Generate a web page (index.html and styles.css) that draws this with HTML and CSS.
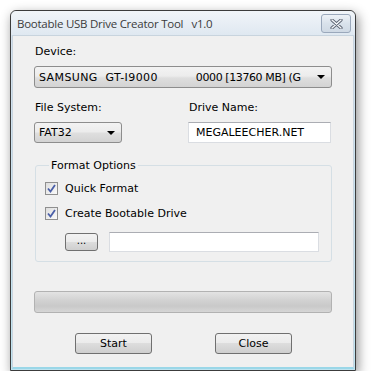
FILE: index.html
```html
<!DOCTYPE html>
<html>
<head>
<meta charset="utf-8">
<link rel="stylesheet" href="styles.css">
</head>
<body>
<div class="window">
  <div class="titlebar">
    <span class="title">Bootable USB Drive Creator Tool&nbsp;&nbsp; v1.0</span>
    <div class="close-btn">
      <svg width="13" height="10" viewBox="0 0 13 10"><path d="M2 1 L11 9 M11 1 L2 9" stroke="#5a6270" stroke-width="3.2" stroke-linecap="round"/><path d="M2 1 L11 9 M11 1 L2 9" stroke="#f4f6f9" stroke-width="1.4" stroke-linecap="round"/></svg>
    </div>
  </div>
  <div class="client">
    <div class="label">Device:</div>
    <div class="combo combo-device"><span class="combo-text"><span class="dev-name">SAMSUNG  GT-I9000</span><span class="dev-info">0000 [13760 MB] (G</span></span><span class="arrow"></span></div>
    <div class="row">
      <div class="col col-fs">
        <div class="label">File System:</div>
        <div class="combo combo-fs"><span class="combo-text">FAT32</span><span class="arrow"></span></div>
      </div>
      <div class="col col-dn">
        <div class="label">Drive Name:</div>
        <div class="textbox textbox-dn">MEGALEECHER.NET</div>
      </div>
    </div>
    <fieldset class="group">
      <legend>Format Options</legend>
      <div class="check-row"><span class="checkbox"><svg width="9" height="9" viewBox="0 0 9 9"><path d="M1 4.5 L3.5 7.5 L8 1" fill="none" stroke="#4a5fa8" stroke-width="1.8"/></svg></span><span>Quick Format</span></div>
      <div class="check-row"><span class="checkbox"><svg width="9" height="9" viewBox="0 0 9 9"><path d="M1 4.5 L3.5 7.5 L8 1" fill="none" stroke="#4a5fa8" stroke-width="1.8"/></svg></span><span>Create Bootable Drive</span></div>
      <div class="browse-row">
        <div class="btn btn-browse">...</div>
        <div class="textbox textbox-path"></div>
      </div>
    </fieldset>
    <div class="progress"></div>
    <div class="buttons">
      <div class="btn btn-main">Start</div>
      <div class="btn btn-main">Close</div>
    </div>
  </div>
</div>
</body>
</html>
```

FILE: styles.css
```css
html, body {
  margin: 0;
  padding: 0;
  background: #ffffff;
}
body {
  padding: 10px 0 0 10px;
  font-family: "DejaVu Sans", Tahoma, sans-serif;
  font-size: 11px;
  color: #000;
}
.window {
  width: 344px;
  height: 359px;
  border: 1px solid #3c3c3c;
  border-radius: 6px 6px 0 0;
  background: linear-gradient(#e6eef6, #d3e1ee 30px, #bfe3ef);
  box-shadow: 2px 4px 12px rgba(0,0,0,0.45);
  display: flex;
  flex-direction: column;
}
.titlebar {
  height: 24px;
  display: flex;
  align-items: center;
  justify-content: space-between;
  padding: 0 4px 0 6px;
  background: linear-gradient(#f1f5f9, #dfe8f1);
  border-radius: 6px 6px 0 0;
}
.title {
  font-family: "Open Sans", "Noto Sans", sans-serif;
  font-size: 11.5px;
  color: #3b3b3b;
  letter-spacing: -0.25px;
}
.close-btn {
  width: 30px;
  height: 19px;
  box-sizing: border-box;
  border: 1px solid #9aa8bb;
  border-radius: 3px;
  background: linear-gradient(#edf2f7, #d9e2eb 50%, #cfd9e4);
  display: flex;
  align-items: center;
  justify-content: center;
  margin-top: 1px;
}
.client {
  flex: 1;
  margin: 0 1px 1px 1px;
  background: #f0f0f0;
  border: 1px solid #c8d4de;
  border-bottom: 2px solid #9ad7e8;
  padding: 9px 21px 0 21px;
}
.label {
  height: 13px;
  line-height: 13px;
  padding-left: 1px;
}
.combo {
  box-sizing: border-box;
  border: 1px solid #8d8d8d;
  border-radius: 3px;
  background: linear-gradient(#f3f3f3, #ececec 45%, #dedede 55%, #d3d3d3);
  display: flex;
  align-items: center;
  justify-content: space-between;
  padding: 0 6px 0 4px;
}
.combo-text {
  white-space: pre;
}
.dev-name {
  letter-spacing: 0.4px;
}
.dev-info {
  letter-spacing: -0.4px;
  margin-left: 38px;
}
.arrow {
  width: 0;
  height: 0;
  border-left: 4px solid transparent;
  border-right: 4px solid transparent;
  border-top: 4px solid #000;
}
.combo-device {
  margin-top: 8px;
  height: 22px;
}
.row {
  display: flex;
  margin-top: 13px;
}
.col-fs {
  width: 154px;
}
.col-dn {
  flex: 1;
}
.combo-fs {
  margin-top: 8px;
  width: 88px;
  height: 21px;
}
.textbox {
  box-sizing: border-box;
  background: #fff;
  border: 1px solid #dadde2;
  border-top-color: #abadb3;
}
.textbox-dn {
  margin-top: 8px;
  height: 21px;
  width: 143px;
  padding: 3px 0 0 7px;
}
.group {
  margin: 16px 0 0 1px;
  padding: 10px 12px 9px 9px;
  border: 1px solid #d5dfe5;
  border-radius: 3px;
}
.group legend {
  padding: 0 2px;
  margin-left: 4px;
}
.check-row {
  display: flex;
  align-items: center;
  height: 13px;
  margin-bottom: 12px;
}
.checkbox {
  box-sizing: border-box;
  width: 13px;
  height: 13px;
  border: 1px solid #8f8f8f;
  background: linear-gradient(135deg, #dedede, #fafafa);
  display: flex;
  align-items: center;
  justify-content: center;
  margin-right: 7px;
}
.browse-row {
  display: flex;
  align-items: center;
  margin-top: 2px;
  padding-left: 20px;
}
.btn {
  box-sizing: border-box;
  border: 1px solid #707070;
  border-radius: 3px;
  background: linear-gradient(#f2f2f2, #ebebeb 50%, #dddddd 50%, #cfcfcf);
  display: flex;
  align-items: center;
  justify-content: center;
}
.btn-browse {
  width: 33px;
  height: 18px;
  font-size: 10px;
  line-height: 1;
  padding-bottom: 2px;
}
.textbox-path {
  margin-left: 11px;
  width: 210px;
  height: 20px;
}
.progress {
  margin-top: 29px;
  height: 22px;
  box-sizing: border-box;
  border: 1px solid #b2b2b2;
  border-radius: 3px;
  background: linear-gradient(#e3e3e3, #d2d2d2 40%, #c9c9c9 70%, #d6d6d6);
}
.buttons {
  display: flex;
  justify-content: space-between;
  padding: 0 40px 0 41px;
  margin-top: 20px;
}
.btn-main {
  width: 77px;
  height: 21px;
}
```
